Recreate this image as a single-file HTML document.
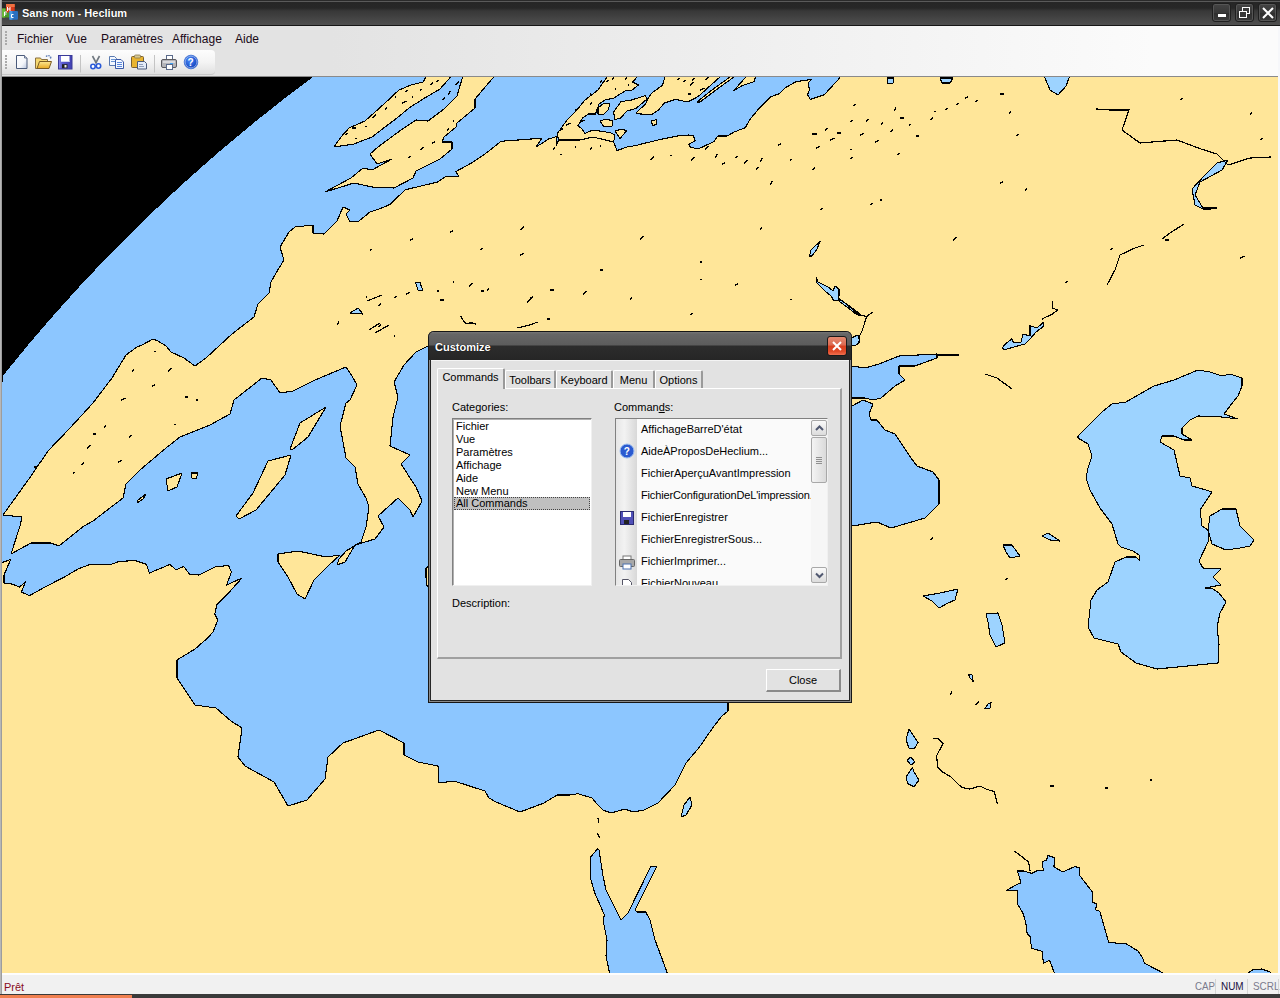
<!DOCTYPE html>
<html><head><meta charset="utf-8">
<style>
*{box-sizing:border-box}
html,body{margin:0;padding:0}
body{width:1280px;height:998px;overflow:hidden;position:relative;background:#3c3c3c;font-family:"Liberation Sans",sans-serif;font-size:11px;color:#000}
.abs{position:absolute}
#title{left:0;top:0;width:1280px;height:26px;background:linear-gradient(#2a2a2a 0,#2a2a2a 1px,#5a5a5a 1px,#5a5a5a 2px,#262626 2px,#272727 8px,#383838 11px,#4e4e4e 24.5px,#161616 25px)}
#title .t{left:22px;top:7px;color:#fff;font-weight:bold;font-size:11px;letter-spacing:0px;text-shadow:0 0 1px #000}
.wb{top:3px;width:19px;height:19px;border:1px solid #1f1f1f;border-radius:3px;background:linear-gradient(#444,#383838 50%,#2e2e2e 51%,#3a3a3a);box-shadow:inset 0 0 0 1px #555}
#menu{left:2px;top:26px;width:1276px;height:24px;background:linear-gradient(to right,#e3e3e3 0,#e3e3e3 330px,#fbfbfb 1150px)}
#menu span{position:absolute;top:6px;font-size:12px;color:#1a0a18}
#tbar{left:2px;top:50px;width:1276px;height:27px;background:linear-gradient(to right,#e3e3e3 0,#e3e3e3 330px,#fbfbfb 1150px)}
#tool{left:2px;top:50px;width:213px;height:25px;border-radius:0 4px 4px 0;background:linear-gradient(#fdfdfd,#f4f4f4 50%,#e0e0e0);border-bottom:1px solid #c8c8c8}
#mapbox{left:2px;top:76px;width:1276px;height:897px;overflow:hidden;border-top:1px solid #8a8a8a}
#mapbox svg{position:absolute;left:-2px;top:-77px}
#status{left:2px;top:973px;width:1278px;height:21px;background:#f1f1f1;border-top:2px solid #fdfdfd}
#status .p{left:2px;top:6px;color:#8a0c1c;font-size:11px}
#status .k{top:5px;font-size:11px;color:#7a7a8c}
#lb{left:0;top:0;width:2px;height:994px;background:linear-gradient(to right,#c4c4c4,#909090)}
#rb{left:1278px;top:26px;width:2px;height:968px;background:#f6f7fa}
#task{left:0;top:994px;width:1280px;height:4px;background:#3a3a3a}
#task .o{left:0;top:1px;width:132px;height:3px;background:#f08050}

/* dialog */
#dlg{left:428px;top:331px;width:424px;height:372px;background:#262626;border-radius:6px 6px 0 0;box-shadow:inset 0 0 0 1px #161616,inset 0 0 0 2px #8a8a8a}
#dlg .tb{left:1px;top:1px;width:422px;height:28px;border-radius:5px 5px 0 0;background:linear-gradient(#777 0,#666 2px,#5c5c5c 13px,#2c2c2c 14px,#262626 28px)}
#dlg .tt{left:7px;top:10px;color:#fff;font-weight:bold;font-size:11px;text-shadow:0 0 1px #000}
#dlg .xb{left:399px;top:5px;width:20px;height:20px;border-radius:3px;border:1px solid #1a1a1a;background:linear-gradient(#e58a70 0,#dc6a52 45%,#d8401f 50%,#e04a28 80%,#f07050 100%)}
#dlg .client{left:3px;top:29px;width:418px;height:340px;background:#e2e2e2;border-top:1px solid #f4f4f4}
.tab{position:absolute;top:9px;height:18px;background:#e2e2e2;border:1px solid #fff;border-bottom:none;border-right:2px solid #9a9a9a;border-radius:2px 2px 0 0;font-size:11px;padding-top:3px;text-align:center}
.tab.act{top:7px;height:21px;z-index:2;padding-top:2px}
#panel{left:6px;top:27px;width:405px;height:271px;border:1px solid #fff;border-right:2px solid #a0a0a0;border-bottom:2px solid #a0a0a0}
.lbl{position:absolute;font-size:11px}
#cat{left:21px;top:57px;width:140px;height:168px;background:#fff;border:1px solid #808080;border-right-color:#f0f0f0;border-bottom-color:#f0f0f0;box-shadow:inset 1px 1px 0 #b0b0b0}
#cat div{position:absolute;left:3px;font-size:11px;line-height:13px}
#cmd{left:184px;top:57px;width:213px;height:168px;background:#fafafa;border:1px solid #808080;border-right-color:#f0f0f0;border-bottom-color:#f0f0f0;overflow:hidden}
#cmd .gut{left:0;top:0;width:21px;height:166px;background:linear-gradient(to right,#e6e6e6,#f2f2f2 40%,#d8d8d8)}
#cmd .it{position:absolute;left:25px;font-size:11px;white-space:nowrap}
#cmd .sb{left:195px;top:0;width:17px;height:166px;background:#f6f6f6}
.sbtn{position:absolute;left:0px;width:16px;height:16px;border:1px solid #a8a8a8;border-radius:2px;background:linear-gradient(#fafafa,#dcdcdc)}
.thumb{position:absolute;left:0px;top:18px;width:16px;height:46px;border:1px solid #a8a8a8;border-radius:2px;background:linear-gradient(to right,#f4f4f4,#dadada)}
#close{left:335px;top:308px;width:75px;height:23px;background:#e2e2e2;border:1px solid #fff;border-right:2px solid #8a8a8a;border-bottom:2px solid #8a8a8a;font-size:11px;text-align:center;padding-top:4px}
</style></head><body>
<div id="title" class="abs">
  <svg class="abs" style="left:0;top:0" width="20" height="22" viewBox="0 0 20 22">
    <rect x="2" y="8.5" width="7.5" height="9" rx="1" fill="#4a9a2a"/><rect x="2" y="8.5" width="3" height="9" fill="#6ab83a"/>
    <rect x="6" y="4" width="8.7" height="8.5" rx="1" fill="#d83a1a"/><rect x="6" y="4" width="8.7" height="3" fill="#f07040"/>
    <rect x="9.4" y="11" width="8.6" height="8.7" rx="1" fill="#2a70c0"/><rect x="9.4" y="11" width="3" height="8.7" fill="#4a9ae0"/>
    <path d="M7.5,7 v4 M10,7 v4 M7.5,9 h2.5" stroke="#fff" stroke-width="1"/>
    <path d="M4.5,12 v4 M4.5,12 h2.5 M4.5,14 h2" stroke="#fff" stroke-width="1"/>
    <path d="M13.5,14.5 h-2 v3 h2" stroke="#fff" stroke-width="1" fill="none"/>
  </svg>
  <div class="abs t">Sans nom - Heclium</div>
  <div class="abs wb" style="left:1212px"><div class="abs" style="left:5px;top:10px;width:8px;height:3px;background:#fff"></div></div>
  <div class="abs wb" style="left:1235px"><div class="abs" style="left:6px;top:3px;width:8px;height:7px;border:1.5px solid #fff"></div><div class="abs" style="left:3px;top:7px;width:8px;height:7px;border:1.5px solid #fff;background:#3a3a3a"></div></div>
  <div class="abs wb" style="left:1258px"><svg class="abs" style="left:2px;top:2px" width="14" height="14"><path d="M2,2 L12,12 M12,2 L2,12" stroke="#fff" stroke-width="2"/></svg></div>
</div>
<div id="menu" class="abs">
  <div class="abs" style="left:3px;top:5px;width:2px;height:14px;background:repeating-linear-gradient(#aaa 0,#aaa 2px,transparent 2px,transparent 3px)"></div>
  <span style="left:15px">Fichier</span><span style="left:64px">Vue</span><span style="left:99px">Paramètres</span><span style="left:170px">Affichage</span><span style="left:233px">Aide</span>
</div>
<div id="tbar" class="abs"></div>
<div id="tool" class="abs">
  <div class="abs" style="left:3px;top:5px;width:2px;height:14px;background:repeating-linear-gradient(#aaa 0,#aaa 2px,transparent 2px,transparent 3px)"></div>
  <svg class="abs" style="left:0;top:0" width="213" height="25">
    <defs>
      <linearGradient id="gdoc" x1="0" y1="0" x2="1" y2="1"><stop offset="0" stop-color="#fff"/><stop offset="0.6" stop-color="#f4f6fa"/><stop offset="1" stop-color="#b8c4dc"/></linearGradient>
      <linearGradient id="gfold" x1="0" y1="0" x2="0" y2="1"><stop offset="0" stop-color="#fde890"/><stop offset="1" stop-color="#e8a820"/></linearGradient>
      <linearGradient id="gflop" x1="0" y1="0" x2="1" y2="0"><stop offset="0" stop-color="#8c8ce8"/><stop offset="0.3" stop-color="#5a5ad0"/><stop offset="1" stop-color="#4040b0"/></linearGradient>
      <radialGradient id="ghelp" cx="0.4" cy="0.35" r="0.7"><stop offset="0" stop-color="#4a8af8"/><stop offset="1" stop-color="#0a3ab8"/></radialGradient>
    </defs>
    <path d="M14.5,5.5 h8 l2.5,2.5 v10.5 h-10.5 z" fill="url(#gdoc)" stroke="#4a5a7a" stroke-width="1"/>
    <path d="M22.5,5.5 v2.5 h2.5" fill="#dde" stroke="#4a5a7a" stroke-width="0.8"/>
    <path d="M33.5,8 h5 l1,1.5 h6 v9 h-12 z" fill="#f6d870" stroke="#8a7040" stroke-width="1"/>
    <path d="M35,18.5 l2.5,-7 h12 l-2.5,7 z" fill="url(#gfold)" stroke="#7a5a20" stroke-width="1"/>
    <path d="M44,6.5 q2.5,-2 5,0.5" fill="none" stroke="#3a60a8" stroke-width="1.2" stroke-dasharray="1.5,1"/><path d="M47.5,7.5 l2,-0.5 -0.5,2 z" fill="#3a60a8"/>
    <rect x="56.5" y="5.5" width="13.5" height="13.5" fill="url(#gflop)" stroke="#3a3a98" stroke-width="1"/>
    <rect x="59" y="6" width="8.5" height="6" fill="#fff"/><rect x="59" y="11" width="8.5" height="1" fill="#d0d4f0"/>
    <rect x="60" y="14.2" width="5.5" height="4" fill="#222"/><rect x="62.5" y="15" width="2" height="2.5" fill="#eee"/>
    <line x1="78.5" y1="5" x2="78.5" y2="22.5" stroke="#c4c4c4"/>
    <path d="M90.5,6 L94.5,13.5 M97.5,6 L93.5,13.5" stroke="#707880" stroke-width="1.6"/>
    <circle cx="91" cy="16.5" r="2.2" fill="#fff" stroke="#2a5ad8" stroke-width="1.6"/><circle cx="96.5" cy="16" r="2.2" fill="#fff" stroke="#2a5ad8" stroke-width="1.6"/>
    <path d="M107.5,6.5 h5 l2,2 v7 h-7 z" fill="#f4f8ff" stroke="#5a7ab0" stroke-width="1"/><path d="M109,9.5 h4 M109,11.5 h4" stroke="#5a8ad0" stroke-width="0.9"/>
    <path d="M113.5,9.5 h5.5 l2.5,2.5 v6.5 h-8 z" fill="#f4f8ff" stroke="#3a5aa8" stroke-width="1"/><path d="M115,12.5 h5 M115,14.5 h5 M115,16.5 h5" stroke="#4a7ad8" stroke-width="0.9"/>
    <rect x="129.5" y="6.5" width="12" height="11" rx="1" fill="#e8b430" stroke="#7a6030" stroke-width="1"/>
    <rect x="132.5" y="5" width="6" height="3" rx="1" fill="#d8c890" stroke="#8a7a50" stroke-width="0.8"/>
    <path d="M135.5,11.5 h7 l2,2 v5.5 h-9 z" fill="#e4ecf8" stroke="#4a5a7a" stroke-width="1"/><path d="M137,14.5 h4 M137,16.5 h5" stroke="#7a8aa8" stroke-width="0.8"/>
    <line x1="152.5" y1="5" x2="152.5" y2="22.5" stroke="#c4c4c4"/>
    <rect x="164.5" y="5.5" width="6" height="4" fill="#fff" stroke="#5a6a8a" stroke-width="1"/>
    <rect x="159.5" y="9.5" width="15" height="8" rx="1.5" fill="#b4b4b8" stroke="#5a5a60" stroke-width="1"/><rect x="161" y="11" width="12" height="2" fill="#d8d8dc"/><rect x="168" y="13" width="3" height="1" fill="#40a0f0"/>
    <rect x="164.5" y="14.5" width="6" height="5" fill="#fff" stroke="#5a6a8a" stroke-width="1"/>
    <circle cx="189" cy="12" r="6.8" fill="url(#ghelp)" stroke="#4a7ad8" stroke-width="1"/><circle cx="189" cy="12" r="5.8" fill="none" stroke="#fff" stroke-width="0.6" opacity="0.7"/>
    <text x="185.6" y="16" font-size="10" font-weight="bold" fill="#fff" font-family="Liberation Sans">?</text>
  </svg>
</div>
<div id="mapbox" class="abs">
<svg width="1280" height="998" viewBox="0 0 1280 998" shape-rendering="crispEdges">
<rect x="0" y="0" width="1280" height="998" fill="#FFE699"/>
<path d="M2,376 A1660,1660 0 0 1 312,77 L313.5,75.5 L840,75.5 L840,75.5 L839.4,78.3 L833.75,84.4 L824.4,94.7 L810.3,99.4 L807.5,94.7 L809.4,90 L808.4,82.5 L811.25,79.7 L809.4,79.7 L796,81.6 L785,88 L779.4,93.75 L771,96.6 L758.75,108.75 L749.4,120 L745.6,127.5 L733.75,132.2 L727.2,136 L717.8,136 L714,141.6 L698,149 L690.6,147.2 L688.75,144.4 L695.3,140.6 L693.4,136 L688.75,135 L677.5,136 L663.4,138.75 L640,144.4 L636,145.5 L627,147 L617,150.6 L613.6,142 L593,137 L580,140 L558.6,140 L556.5,145.5 L557,136.3 L548.75,139 L536,147 L541.75,138.4 L539,138.4 L520.6,139.8 L501,141.25 L487,152.5 L472.8,162.3 L456,171.5 L458.75,176.4 L446,176.4 L437.7,182 L405.3,189.8 L389.8,204.5 L380,208.75 L370,212 L359,221 L350,222 L346,214 L350,210 L343,207 L337,221 L324,234 L313,233 L313,225 L295,227 L289,232 L280,247 L284,260 L276,273 L271,282 L269,293 L258,304 L254,317 L232,334 L206,358 L195,366 L188,361 L184,358 L171,352 L166,346 L158,341 L153,339 L142,345 L137,347 L126,355 L112,378 L93,403 L70,428 L48,451 L31,476 L3,515 L22,517 L20,526 L11,554 L31,543 L51,543 L59,546 L84,526 L93,521 L123,498 L126,484 L140,470 L166,448 L180,437 L210,425 L230,414 L234,400 L262,378 L271,380 L280,393 L293,391 L315,380 L346,367 L352,376 L357,385 L350,400 L346,403 L340,426 L346,458 L355,467 L358,484 L366,498 L369,507 L366,527 L361,542 L346,551 L339,559 L337,565 L345,562 L355,545 L375,539 L384,527 L378,516 L398,498 L410,510 L413,517 L422,501 L416,487 L401,464 L410,455 L390,446 L393,417 L398,397 L394,382 L404,365 L416,352 L428,346 L445,346 L445,690 L728,690 L728,702 L728,711 L721.5,716.5 L713,727.5 L699.5,747 L686,763 L675,785 L658,803 L644,810 L633,812 L625,809 L611,813 L603,810 L597.5,804.7 L592,798 L578,793.7 L570,795 L557,795 L544,803 L520,812 L496,802 L489,798 L485,791 L454,781 L439,783 L438,766 L418,762 L404,755 L404,743 L379,730 L343,743 L328,757 L325,779 L307,800 L288,806 L274,782 L245,766 L238,757 L242,728 L231,721 L216,708 L195,705 L177,678 L177,660 L195,649 L207,638.6 L213,632 L217.8,620 L214.8,614 L216.8,604.5 L228.5,593 L242,578 L226.6,585 L231.4,572 L228.5,565.4 L215,567 L199,575 L189.5,574 L183.6,566.4 L176,570 L170,564.4 L149.4,573 L146.5,564.4 L135,560.5 L119,561.5 L111,564.4 L90,564.4 L78,569 L64.5,577 L45,587 L29.3,595.7 L21.5,592 L25.4,582 L19.5,587 L11.7,584 L4,583 L4,575 L10.7,559.5 L2,562.5 L1,562.5 Z" fill="#8CC6FF" stroke="#000" stroke-width="1.1" stroke-linejoin="round"/>
<path d="M0,70 L330,70 L312,77 A1660,1660 0 0 0 2,376 L0,390 Z" fill="#000"/>
<polygon points="334,147 341,137 349,128 365,121 384,104 399,90 411,85 423,82 427,75.5 452,75.5 440,89 423,99 409,108 397,118 385,127 372,137 354,144" fill="#FFE699" stroke="#000" stroke-width="1.1" stroke-linejoin="round"/>
<polygon points="463,75.5 495,75.5 475,99 475,108 457,123 456,127 444,137 442,142 452,142 452,149 440,159 416,171 413,178 394,188 372,187 354,183 325,192 351,178 363,168 372,170 392,159 377,164 370,154 378,147 401,130 416,120 428,121 444,109 457,96" fill="#FFE699" stroke="#000" stroke-width="1.1" stroke-linejoin="round"/>
<polygon points="608,75.5 638.5,75.5 632.5,82 638.5,85 632,90 625,91 614,98 605,100 599,104 595.5,114 588.7,114 582.7,118 578,125.7 582,129 585,133.4 593,130 610,132.6 615,135 613.6,142 593,137 580,140 558.6,140 557,134 562,127 567,120 576,111 585,100 598,90" fill="#FFE699" stroke="#000" stroke-width="1.1" stroke-linejoin="round"/>
<polygon points="598,108 604,103 610,104 608,110 603,115 598,114" fill="#FFE699" stroke="#000" stroke-width="1.1" stroke-linejoin="round"/>
<polygon points="600,121 606,119 613,121 612,126 604,127" fill="#FFE699" stroke="#000" stroke-width="1.1" stroke-linejoin="round"/>
<polygon points="613.6,112 621,101.6 631.6,100 645.4,95.6 647,99 636,108.5 627,111 620.5,118 615,119.7" fill="#FFE699" stroke="#000" stroke-width="1.1" stroke-linejoin="round"/>
<polygon points="651,121 656,119.7 657,124 653,125.7" fill="#FFE699" stroke="#000" stroke-width="1.1" stroke-linejoin="round"/>
<polygon points="615,131 622,129 626.5,131 620,138.6" fill="#FFE699" stroke="#000" stroke-width="1.1" stroke-linejoin="round"/>
<polygon points="665.3,75.5 721.6,75.5 698,96.6 687.8,102 675.6,99.4 664.4,103 658.75,109.7 652,114.4 640,114 636,112.8 645.6,104 648,98.4 652,92.8 662.5,85.3" fill="#FFE699" stroke="#000" stroke-width="1.1" stroke-linejoin="round"/>
<polygon points="733.75,90.5 741,82.5 747,75.5 756,75.5 754,81.6 743,85.3" fill="#FFE699" stroke="#000" stroke-width="1.1" stroke-linejoin="round"/>
<polygon points="697,102 712,90 732,75.5 736,75.5 716,90 700,102" fill="#FFE699" stroke="#000" stroke-width="1.1" stroke-linejoin="round"/>
<polygon points="290,449 300,423 326,407 308,437 292,450" fill="#FFE699" stroke="#000" stroke-width="1.1" stroke-linejoin="round"/>
<polygon points="236,516 253,493 268,461 291,455 285,475 256,510 239,519" fill="#FFE699" stroke="#000" stroke-width="1.1" stroke-linejoin="round"/>
<polygon points="278,554 298,551 326,557 340,555 329,565 314,580 305,599 297,594 288,577 278,562" fill="#FFE699" stroke="#000" stroke-width="1.1" stroke-linejoin="round"/>
<polygon points="166,479 182,473 177,487 168,491" fill="#FFE699" stroke="#000" stroke-width="1.1" stroke-linejoin="round"/>
<polygon points="191,473 198,473 196,479 192,478" fill="#FFE699" stroke="#000" stroke-width="1.1" stroke-linejoin="round"/>
<polygon points="138,500 146,494 143,499 137,503" fill="#FFE699" stroke="#000" stroke-width="1.1" stroke-linejoin="round"/>
<polygon points="426,568 429,566 431,570 431,586 427,586 426,578" fill="#FFE699" stroke="#000" stroke-width="1.1" stroke-linejoin="round"/>
<polygon points="852,366 865,368 879,364 899,356 937,354 937,358 915,366 899,366 899,374 905,380 895,386 881,398 873,400 865,398 852,398 800,398 800,366" fill="#8CC6FF" stroke="#000" stroke-width="1.1" stroke-linejoin="round"/>
<polygon points="852,406 863,400 873,404 869,414 871,420 877,420 885,430 895,434 911,458 917,466 933,472 939,480 939,504 925,518 891,528 877,522 852,526 700,530 700,406" fill="#8CC6FF" stroke="#000" stroke-width="1.1" stroke-linejoin="round"/>
<polygon points="597.5,848.8 590.7,857 590.7,879 594.8,893 604.4,915 603,920 607,940 606,956 610,975 668,975 661,956 655,940 650,920 645.8,912 637,912 635,910 656.5,867 651,866 628,913 621,920 606,890 603,876 599,850" fill="#8CC6FF" stroke="#000" stroke-width="1.1" stroke-linejoin="round"/>
<polygon points="1006.3,890.5 1016.7,884.5 1021,883 1017.5,871 1024,871 1031.6,873.4 1037.5,870.4 1043.4,870.4 1042,862 1046.4,860 1048,855.6 1055,857.8 1053.8,866.7 1062.7,872 1074.6,866.7 1079,867.5 1079.8,875.6 1092.4,892 1092.4,902.3 1096.9,903.8 1095.4,909.8 1099.8,911.2 1108.75,942.4 1126.6,944 1138.4,951.3 1143,958.75 1144.4,963.2 1167,975 1055.3,975 1049.4,960.2 1043.4,963.2 1042,951.3 1031.6,948.4 1030,936.5 1027.1,933.5 1025.6,921.6 1022.7,912.7 1017.5,904 1017.5,890.5" fill="#8CC6FF" stroke="#000" stroke-width="1.1" stroke-linejoin="round"/>
<polygon points="1246,975 1252,970 1262,969 1270,972 1272,975" fill="#8CC6FF" stroke="#000" stroke-width="1.1" stroke-linejoin="round"/>
<polygon points="1078,436 1088,426 1102,412 1112,404 1126,402 1154,386 1174,380 1198,370 1210,372 1222,376 1230,374 1242,378 1242,386 1238,396 1230,406 1224,414 1238,419 1222,417 1198,416 1190,420 1182,428 1182,434 1192,440 1184,440 1174,436 1162,436 1160,442 1174,450 1180,476 1190,478 1192,486 1206,490 1212,492 1200,510 1202,526 1208,530 1209,540 1199,561 1203,568 1221,569 1213,577 1221,585 1205,588 1213,589 1219,593 1226,602 1220,613 1217,627 1219,644 1218,663 1157,669 1136,663 1121,652 1118,644 1094,638 1088,627 1091,600 1097,590 1108,582 1115,562 1126,557 1136,557 1140,561 1139,555 1133,551 1121,547 1118,544 1112,524 1100,508 1090,490 1086,478 1088,468 1092,456 1088,444 1078,438" fill="#9DD3FF" stroke="#000" stroke-width="1.1" stroke-linejoin="round"/>
<polygon points="816,277 818,282 822,284 828,287 833,291 835,286 839,289 839,296 838,300 834,301 831,296 826,292 817,283" fill="#9DD3FF" stroke="#000" stroke-width="1.1" stroke-linejoin="round"/>
<polygon points="838,299 844,302 852,309 859,315 861,316 856,314 847,307 840,302" fill="#9DD3FF" stroke="#000" stroke-width="1.1" stroke-linejoin="round"/>
<polygon points="849,339 858,335 860,342 856,345 849,346" fill="#9DD3FF" stroke="#000" stroke-width="1.1" stroke-linejoin="round"/>
<polygon points="1210,516 1222,509 1236,509 1240,526 1254,540 1250,546 1240,548 1226,550 1212,544 1208,530" fill="#9DD3FF" stroke="#000" stroke-width="1.1" stroke-linejoin="round"/>
<polygon points="809.5,256 811,250 815,246 820,241.6 817,249 812,256" fill="#9DD3FF" stroke="#000" stroke-width="1.1" stroke-linejoin="round"/>
<polygon points="415.6,283 420,282.5 423,291 418,290" fill="#9DD3FF" stroke="#000" stroke-width="1.1" stroke-linejoin="round"/>
<polygon points="350,313 358,308 363,314" fill="#9DD3FF" stroke="#000" stroke-width="1.1" stroke-linejoin="round"/>
<polygon points="1044,75.5 1070,75.5 1066,86 1058,95 1050,90" fill="#9DD3FF" stroke="#000" stroke-width="1.1" stroke-linejoin="round"/>
<polygon points="887,78 894,78 893,83 888,84" fill="#9DD3FF" stroke="#000" stroke-width="1.1" stroke-linejoin="round"/>
<polygon points="940,78 953,78 950,83 942,83" fill="#9DD3FF" stroke="#000" stroke-width="1.1" stroke-linejoin="round"/>
<polygon points="1002.5,347.5 1005.6,343.75 1011.9,338.75 1013.75,343 1021,342 1023,334 1030,336 1030,325.6 1037,328 1043,322.5 1044,326 1036,332 1030,339 1025,344 1012,347.5 1004,350" fill="#9DD3FF" stroke="#000" stroke-width="1.1" stroke-linejoin="round"/>
<polygon points="1003,545 1012,545 1020,556 1010,558 1006,552" fill="#9DD3FF" stroke="#000" stroke-width="1.1" stroke-linejoin="round"/>
<polygon points="986,614 998,613 1002,625 1005,643 996,647 990,635 988,622" fill="#9DD3FF" stroke="#000" stroke-width="1.1" stroke-linejoin="round"/>
<polygon points="923,596 940,593 958,589 955,600 948,603 939,608 932,601" fill="#9DD3FF" stroke="#000" stroke-width="1.1" stroke-linejoin="round"/>
<polygon points="1042,536 1048,533 1060,541 1050,540" fill="#9DD3FF" stroke="#000" stroke-width="1.1" stroke-linejoin="round"/>
<polygon points="909,729 906,740 909,748 914,749 918,742.6 911,732" fill="#9DD3FF" stroke="#000" stroke-width="1.1" stroke-linejoin="round"/>
<polygon points="907,760 911,757 915,762 911,765" fill="#9DD3FF" stroke="#000" stroke-width="1.1" stroke-linejoin="round"/>
<polygon points="912.5,767.5 906,777 907.6,783.5 914,786.7 919,780 914,772" fill="#9DD3FF" stroke="#000" stroke-width="1.1" stroke-linejoin="round"/>
<polygon points="968.6,674.4 972,675 973.4,681.7 970,678" fill="#9DD3FF" stroke="#000" stroke-width="1.1" stroke-linejoin="round"/>
<polygon points="984.7,709 988,704 991,702.5 990,708" fill="#9DD3FF" stroke="#000" stroke-width="1.1" stroke-linejoin="round"/>
<polygon points="681,817 684,805 690,797 692,805 686,815" fill="#9DD3FF" stroke="#000" stroke-width="1.1" stroke-linejoin="round"/>
<polygon points="1217,163 1228,160 1222,170 1200,182 1195,195 1203,208 1217,208 1205,210 1195,205 1192,189 1205,175" fill="#9DD3FF" stroke="#000" stroke-width="1.1" stroke-linejoin="round"/>
<polyline points="1014.5,851 1021,856 1028.6,862 1030,871" fill="none" stroke="#000" stroke-width="1.2"/>
<polyline points="598,818 599,823" fill="none" stroke="#000" stroke-width="1.2"/>
<polyline points="597,833 600,838" fill="none" stroke="#000" stroke-width="1.2"/>
<polyline points="838,298 848,305 856,311 861,315 866.5,316.5 873,312" fill="none" stroke="#000" stroke-width="1.2"/>
<polyline points="866.5,316.5 864,325 862,331 859.5,336 859,342" fill="none" stroke="#000" stroke-width="1.2"/>
<polyline points="367,301 382,295" fill="none" stroke="#000" stroke-width="1.2"/>
<polyline points="517,328 530,325 537.5,322" fill="none" stroke="#000" stroke-width="1.2"/>
<polyline points="527,302.5 533,296.6" fill="none" stroke="#000" stroke-width="1.2"/>
<polyline points="460.6,316 465,323 475.6,324" fill="none" stroke="#000" stroke-width="1.2"/>
<polyline points="369,330 380,323" fill="none" stroke="#000" stroke-width="1.2"/>
<polyline points="375,333 389,325" fill="none" stroke="#000" stroke-width="1.2"/>
<polyline points="1042.5,320 1042.5,318.75 1052.5,314 1057.5,310 1052.5,308 1052.5,301" fill="none" stroke="#000" stroke-width="1.2"/>
<polyline points="1096,109 1110,110 1129,110 1122,130 1140,143 1177,140 1201,149 1217,154 1228,165 1250,158 1271,157" fill="none" stroke="#000" stroke-width="1.2"/>
<polyline points="1162,239 1170,233 1184,224" fill="none" stroke="#000" stroke-width="1.2"/>
<polyline points="1107,285 1115,270 1120,255 1135,248 1144,245" fill="none" stroke="#000" stroke-width="1.2"/>
<polyline points="932.5,738.6 938,738.6 943,743.4 936.5,756 938,767.5 943,772.3 951,777 957.4,783.5 962,787.5 970,789 980,786 986,789 994,791.6 996,798 997.5,804.4" fill="none" stroke="#000" stroke-width="1.2"/>
<polyline points="985,374 997,378 1012,389" fill="none" stroke="#000" stroke-width="1.2"/>
<polyline points="938,355 959,355" fill="none" stroke="#000" stroke-width="1.2"/>
<line x1="345.0" y1="135.0" x2="347.5" y2="133.3" stroke="#000" stroke-width="1.3"/>
<line x1="352.0" y1="128.0" x2="356.0" y2="128.0" stroke="#000" stroke-width="1.3"/>
<line x1="365.0" y1="127.0" x2="366.5" y2="125.7" stroke="#000" stroke-width="1.3"/>
<line x1="372.0" y1="118.0" x2="375.8" y2="114.8" stroke="#000" stroke-width="1.3"/>
<line x1="385.0" y1="110.0" x2="386.5" y2="107.4" stroke="#000" stroke-width="1.3"/>
<line x1="395.0" y1="98.0" x2="396.0" y2="96.3" stroke="#000" stroke-width="1.3"/>
<line x1="405.0" y1="92.0" x2="407.3" y2="90.1" stroke="#000" stroke-width="1.3"/>
<line x1="420.0" y1="90.0" x2="421.9" y2="89.3" stroke="#000" stroke-width="1.3"/>
<line x1="430.0" y1="85.0" x2="433.1" y2="82.4" stroke="#000" stroke-width="1.3"/>
<line x1="436.0" y1="82.0" x2="438.3" y2="80.1" stroke="#000" stroke-width="1.3"/>
<line x1="402.0" y1="103.0" x2="406.7" y2="101.3" stroke="#000" stroke-width="1.3"/>
<line x1="412.0" y1="98.0" x2="413.0" y2="96.3" stroke="#000" stroke-width="1.3"/>
<line x1="355.0" y1="139.0" x2="356.6" y2="137.9" stroke="#000" stroke-width="1.3"/>
<line x1="455.0" y1="85.0" x2="458.8" y2="81.8" stroke="#000" stroke-width="1.3"/>
<line x1="448.0" y1="95.0" x2="450.5" y2="90.7" stroke="#000" stroke-width="1.3"/>
<line x1="442.0" y1="100.0" x2="445.1" y2="97.4" stroke="#000" stroke-width="1.3"/>
<line x1="408.0" y1="158.0" x2="410.3" y2="156.1" stroke="#000" stroke-width="1.3"/>
<line x1="420.0" y1="150.0" x2="424.1" y2="147.1" stroke="#000" stroke-width="1.3"/>
<line x1="432.0" y1="143.0" x2="434.8" y2="142.0" stroke="#000" stroke-width="1.3"/>
<line x1="447.0" y1="131.0" x2="448.5" y2="128.4" stroke="#000" stroke-width="1.3"/>
<line x1="453.0" y1="122.0" x2="454.0" y2="120.3" stroke="#000" stroke-width="1.3"/>
<line x1="600.0" y1="83.0" x2="601.5" y2="80.4" stroke="#000" stroke-width="1.3"/>
<line x1="606.0" y1="82.0" x2="608.3" y2="80.1" stroke="#000" stroke-width="1.3"/>
<line x1="612.0" y1="80.0" x2="614.5" y2="75.7" stroke="#000" stroke-width="1.3"/>
<line x1="625.0" y1="80.0" x2="626.9" y2="77.7" stroke="#000" stroke-width="1.3"/>
<line x1="628.0" y1="86.0" x2="629.0" y2="84.3" stroke="#000" stroke-width="1.3"/>
<line x1="615.0" y1="90.0" x2="616.0" y2="88.3" stroke="#000" stroke-width="1.3"/>
<line x1="590.0" y1="95.0" x2="591.0" y2="93.3" stroke="#000" stroke-width="1.3"/>
<line x1="575.0" y1="110.0" x2="577.8" y2="109.0" stroke="#000" stroke-width="1.3"/>
<line x1="566.0" y1="125.0" x2="570.7" y2="123.3" stroke="#000" stroke-width="1.3"/>
<line x1="560.0" y1="130.0" x2="562.8" y2="129.0" stroke="#000" stroke-width="1.3"/>
<line x1="580.0" y1="122.0" x2="584.7" y2="120.3" stroke="#000" stroke-width="1.3"/>
<line x1="590.0" y1="105.0" x2="591.9" y2="102.7" stroke="#000" stroke-width="1.3"/>
<line x1="677.0" y1="80.0" x2="679.5" y2="78.3" stroke="#000" stroke-width="1.3"/>
<line x1="683.0" y1="82.0" x2="685.3" y2="80.1" stroke="#000" stroke-width="1.3"/>
<line x1="690.0" y1="86.0" x2="693.2" y2="82.2" stroke="#000" stroke-width="1.3"/>
<line x1="700.0" y1="90.0" x2="704.7" y2="88.3" stroke="#000" stroke-width="1.3"/>
<line x1="688.0" y1="94.0" x2="691.0" y2="94.0" stroke="#000" stroke-width="1.3"/>
<line x1="692.0" y1="81.0" x2="694.6" y2="77.9" stroke="#000" stroke-width="1.3"/>
<line x1="705.0" y1="80.0" x2="708.8" y2="76.8" stroke="#000" stroke-width="1.3"/>
<line x1="366.0" y1="298.0" x2="367.0" y2="296.3" stroke="#000" stroke-width="1.3"/>
<line x1="378.0" y1="306.0" x2="381.3" y2="303.7" stroke="#000" stroke-width="1.3"/>
<line x1="394.0" y1="298.0" x2="396.5" y2="296.3" stroke="#000" stroke-width="1.3"/>
<line x1="406.0" y1="294.0" x2="409.8" y2="292.6" stroke="#000" stroke-width="1.3"/>
<line x1="437.0" y1="291.0" x2="439.0" y2="291.0" stroke="#000" stroke-width="1.3"/>
<line x1="453.0" y1="283.0" x2="454.0" y2="281.3" stroke="#000" stroke-width="1.3"/>
<line x1="469.0" y1="287.0" x2="472.2" y2="283.2" stroke="#000" stroke-width="1.3"/>
<line x1="481.0" y1="291.0" x2="484.0" y2="291.0" stroke="#000" stroke-width="1.3"/>
<line x1="487.0" y1="291.0" x2="488.5" y2="288.4" stroke="#000" stroke-width="1.3"/>
<line x1="337.0" y1="325.0" x2="339.0" y2="321.5" stroke="#000" stroke-width="1.3"/>
<line x1="378.0" y1="327.0" x2="381.1" y2="324.4" stroke="#000" stroke-width="1.3"/>
<line x1="394.0" y1="337.0" x2="395.3" y2="335.5" stroke="#000" stroke-width="1.3"/>
<line x1="469.0" y1="323.0" x2="473.0" y2="323.0" stroke="#000" stroke-width="1.3"/>
<line x1="530.0" y1="298.0" x2="531.5" y2="296.7" stroke="#000" stroke-width="1.3"/>
<line x1="547.0" y1="319.0" x2="550.0" y2="319.0" stroke="#000" stroke-width="1.3"/>
<line x1="812.0" y1="134.0" x2="817.0" y2="134.0" stroke="#000" stroke-width="1.3"/>
<line x1="825.0" y1="131.0" x2="827.6" y2="127.9" stroke="#000" stroke-width="1.3"/>
<line x1="837.0" y1="133.0" x2="841.0" y2="133.0" stroke="#000" stroke-width="1.3"/>
<line x1="850.0" y1="122.0" x2="852.3" y2="120.1" stroke="#000" stroke-width="1.3"/>
<line x1="866.0" y1="122.0" x2="868.6" y2="118.9" stroke="#000" stroke-width="1.3"/>
<line x1="881.0" y1="125.0" x2="882.5" y2="122.4" stroke="#000" stroke-width="1.3"/>
<line x1="909.0" y1="125.0" x2="910.9" y2="124.3" stroke="#000" stroke-width="1.3"/>
<line x1="934.0" y1="112.0" x2="935.6" y2="110.9" stroke="#000" stroke-width="1.3"/>
<line x1="956.0" y1="105.0" x2="958.5" y2="103.3" stroke="#000" stroke-width="1.3"/>
<line x1="778.0" y1="145.0" x2="780.8" y2="144.0" stroke="#000" stroke-width="1.3"/>
<line x1="816.0" y1="148.0" x2="819.8" y2="146.6" stroke="#000" stroke-width="1.3"/>
<line x1="850.0" y1="150.0" x2="851.6" y2="148.9" stroke="#000" stroke-width="1.3"/>
<line x1="875.0" y1="142.0" x2="878.8" y2="140.6" stroke="#000" stroke-width="1.3"/>
<line x1="691.0" y1="161.0" x2="694.2" y2="157.2" stroke="#000" stroke-width="1.3"/>
<line x1="722.0" y1="164.0" x2="724.8" y2="163.0" stroke="#000" stroke-width="1.3"/>
<line x1="744.0" y1="164.0" x2="747.2" y2="160.2" stroke="#000" stroke-width="1.3"/>
<line x1="756.0" y1="170.0" x2="758.6" y2="166.9" stroke="#000" stroke-width="1.3"/>
<line x1="812.0" y1="170.0" x2="815.3" y2="167.7" stroke="#000" stroke-width="1.3"/>
<line x1="850.0" y1="159.0" x2="852.3" y2="157.1" stroke="#000" stroke-width="1.3"/>
<line x1="897.0" y1="155.0" x2="899.5" y2="153.3" stroke="#000" stroke-width="1.3"/>
<line x1="916.0" y1="136.0" x2="919.0" y2="136.0" stroke="#000" stroke-width="1.3"/>
<line x1="853.0" y1="106.0" x2="855.3" y2="104.1" stroke="#000" stroke-width="1.3"/>
<line x1="894.0" y1="111.0" x2="896.0" y2="107.5" stroke="#000" stroke-width="1.3"/>
<line x1="1009.0" y1="114.0" x2="1010.9" y2="111.7" stroke="#000" stroke-width="1.3"/>
<line x1="1016.0" y1="136.0" x2="1018.3" y2="134.1" stroke="#000" stroke-width="1.3"/>
<line x1="1000.0" y1="183.0" x2="1002.8" y2="182.0" stroke="#000" stroke-width="1.3"/>
<line x1="705.0" y1="150.0" x2="708.2" y2="146.2" stroke="#000" stroke-width="1.3"/>
<line x1="715.0" y1="158.0" x2="717.5" y2="153.7" stroke="#000" stroke-width="1.3"/>
<line x1="735.0" y1="158.0" x2="737.5" y2="156.3" stroke="#000" stroke-width="1.3"/>
<line x1="760.0" y1="162.0" x2="762.5" y2="157.7" stroke="#000" stroke-width="1.3"/>
<line x1="790.0" y1="160.0" x2="791.9" y2="159.3" stroke="#000" stroke-width="1.3"/>
<line x1="830.0" y1="140.0" x2="834.7" y2="138.3" stroke="#000" stroke-width="1.3"/>
<line x1="860.0" y1="135.0" x2="863.8" y2="133.6" stroke="#000" stroke-width="1.3"/>
<line x1="890.0" y1="132.0" x2="893.1" y2="129.4" stroke="#000" stroke-width="1.3"/>
<line x1="900.0" y1="118.0" x2="904.0" y2="118.0" stroke="#000" stroke-width="1.3"/>
<line x1="930.0" y1="120.0" x2="933.1" y2="117.4" stroke="#000" stroke-width="1.3"/>
<line x1="945.0" y1="110.0" x2="947.3" y2="108.1" stroke="#000" stroke-width="1.3"/>
<line x1="965.0" y1="98.0" x2="967.8" y2="97.0" stroke="#000" stroke-width="1.3"/>
<line x1="975.0" y1="102.0" x2="977.3" y2="100.1" stroke="#000" stroke-width="1.3"/>
<line x1="553.0" y1="150.0" x2="554.5" y2="147.4" stroke="#000" stroke-width="1.3"/>
<line x1="560.0" y1="155.0" x2="561.5" y2="153.7" stroke="#000" stroke-width="1.3"/>
<line x1="575.0" y1="148.0" x2="576.0" y2="146.3" stroke="#000" stroke-width="1.3"/>
<line x1="590.0" y1="150.0" x2="591.5" y2="147.4" stroke="#000" stroke-width="1.3"/>
<line x1="600.0" y1="147.0" x2="601.3" y2="145.5" stroke="#000" stroke-width="1.3"/>
<line x1="650.0" y1="160.0" x2="653.8" y2="156.8" stroke="#000" stroke-width="1.3"/>
<line x1="670.0" y1="156.0" x2="671.6" y2="154.9" stroke="#000" stroke-width="1.3"/>
<line x1="121.0" y1="400.0" x2="125.7" y2="398.3" stroke="#000" stroke-width="1.3"/>
<line x1="93.0" y1="434.0" x2="96.0" y2="434.0" stroke="#000" stroke-width="1.3"/>
<line x1="104.0" y1="428.0" x2="105.9" y2="425.7" stroke="#000" stroke-width="1.3"/>
<line x1="87.0" y1="449.0" x2="90.2" y2="445.2" stroke="#000" stroke-width="1.3"/>
<line x1="81.0" y1="465.0" x2="84.1" y2="462.4" stroke="#000" stroke-width="1.3"/>
<line x1="73.0" y1="473.0" x2="74.9" y2="472.3" stroke="#000" stroke-width="1.3"/>
<line x1="118.0" y1="462.0" x2="121.8" y2="460.6" stroke="#000" stroke-width="1.3"/>
<line x1="129.0" y1="438.0" x2="131.6" y2="434.9" stroke="#000" stroke-width="1.3"/>
<line x1="174.0" y1="425.0" x2="175.6" y2="423.9" stroke="#000" stroke-width="1.3"/>
<line x1="196.0" y1="400.0" x2="198.0" y2="400.0" stroke="#000" stroke-width="1.3"/>
<line x1="185.0" y1="397.0" x2="188.0" y2="397.0" stroke="#000" stroke-width="1.3"/>
<line x1="152.0" y1="386.0" x2="154.8" y2="385.0" stroke="#000" stroke-width="1.3"/>
<line x1="132.0" y1="372.0" x2="133.5" y2="369.4" stroke="#000" stroke-width="1.3"/>
<line x1="154.0" y1="352.0" x2="155.6" y2="350.9" stroke="#000" stroke-width="1.3"/>
<line x1="168.0" y1="372.0" x2="171.2" y2="368.2" stroke="#000" stroke-width="1.3"/>
<line x1="34.0" y1="467.0" x2="37.0" y2="467.0" stroke="#000" stroke-width="1.3"/>
<line x1="520.0" y1="230.0" x2="523.8" y2="226.8" stroke="#000" stroke-width="1.3"/>
<line x1="640.0" y1="240.0" x2="643.2" y2="236.2" stroke="#000" stroke-width="1.3"/>
<line x1="700.0" y1="262.0" x2="702.0" y2="262.0" stroke="#000" stroke-width="1.3"/>
<line x1="760.0" y1="230.0" x2="761.5" y2="227.4" stroke="#000" stroke-width="1.3"/>
<line x1="820.0" y1="210.0" x2="822.5" y2="208.3" stroke="#000" stroke-width="1.3"/>
<line x1="870.0" y1="205.0" x2="872.5" y2="203.3" stroke="#000" stroke-width="1.3"/>
<line x1="770.0" y1="185.0" x2="772.5" y2="180.7" stroke="#000" stroke-width="1.3"/>
<line x1="953.0" y1="241.0" x2="956.2" y2="237.2" stroke="#000" stroke-width="1.3"/>
<line x1="1025.0" y1="191.0" x2="1026.5" y2="188.4" stroke="#000" stroke-width="1.3"/>
<line x1="1065.0" y1="283.0" x2="1067.5" y2="281.3" stroke="#000" stroke-width="1.3"/>
<line x1="1165.0" y1="240.0" x2="1169.0" y2="240.0" stroke="#000" stroke-width="1.3"/>
<line x1="1260.0" y1="140.0" x2="1262.5" y2="138.3" stroke="#000" stroke-width="1.3"/>
<line x1="1240.0" y1="258.0" x2="1244.7" y2="256.3" stroke="#000" stroke-width="1.3"/>
<line x1="600.0" y1="270.0" x2="603.0" y2="270.0" stroke="#000" stroke-width="1.3"/>
<line x1="700.0" y1="280.0" x2="701.5" y2="278.7" stroke="#000" stroke-width="1.3"/>
<line x1="735.0" y1="285.0" x2="737.8" y2="284.0" stroke="#000" stroke-width="1.3"/>
<line x1="690.0" y1="315.0" x2="692.5" y2="313.3" stroke="#000" stroke-width="1.3"/>
<line x1="583.0" y1="295.0" x2="586.2" y2="291.2" stroke="#000" stroke-width="1.3"/>
<line x1="550.0" y1="290.0" x2="554.0" y2="290.0" stroke="#000" stroke-width="1.3"/>
<line x1="630.0" y1="300.0" x2="631.9" y2="297.7" stroke="#000" stroke-width="1.3"/>
<line x1="790.0" y1="300.0" x2="791.6" y2="298.9" stroke="#000" stroke-width="1.3"/>
<line x1="700.0" y1="400.0" x2="701.6" y2="398.9" stroke="#000" stroke-width="1.3"/>
<line x1="930.0" y1="540.0" x2="933.3" y2="537.7" stroke="#000" stroke-width="1.3"/>
<line x1="1005.0" y1="580.0" x2="1007.5" y2="578.3" stroke="#000" stroke-width="1.3"/>
<line x1="950.0" y1="695.0" x2="952.0" y2="691.5" stroke="#000" stroke-width="1.3"/>
<line x1="975.0" y1="705.0" x2="978.8" y2="701.8" stroke="#000" stroke-width="1.3"/>
<line x1="1050.0" y1="786.0" x2="1054.0" y2="786.0" stroke="#000" stroke-width="1.3"/>
<line x1="1105.0" y1="788.0" x2="1108.0" y2="788.0" stroke="#000" stroke-width="1.3"/>
<line x1="1150.0" y1="780.0" x2="1152.0" y2="780.0" stroke="#000" stroke-width="1.3"/>
<line x1="370.0" y1="250.0" x2="371.9" y2="249.3" stroke="#000" stroke-width="1.3"/>
<line x1="410.0" y1="240.0" x2="412.8" y2="239.0" stroke="#000" stroke-width="1.3"/>
<line x1="450.0" y1="232.0" x2="452.8" y2="231.0" stroke="#000" stroke-width="1.3"/>
<line x1="480.0" y1="250.0" x2="482.3" y2="248.1" stroke="#000" stroke-width="1.3"/>
<line x1="520.0" y1="255.0" x2="523.8" y2="253.6" stroke="#000" stroke-width="1.3"/>
<line x1="440.0" y1="300.0" x2="444.0" y2="300.0" stroke="#000" stroke-width="1.3"/>
<line x1="880.0" y1="200.0" x2="882.0" y2="200.0" stroke="#000" stroke-width="1.3"/>
<line x1="1110.0" y1="250.0" x2="1112.5" y2="248.3" stroke="#000" stroke-width="1.3"/>
<line x1="1180.0" y1="100.0" x2="1182.3" y2="98.1" stroke="#000" stroke-width="1.3"/>
<line x1="1250.0" y1="115.0" x2="1251.5" y2="112.4" stroke="#000" stroke-width="1.3"/>
<line x1="1000.0" y1="94.0" x2="1004.0" y2="94.0" stroke="#000" stroke-width="1.3"/>
</svg>
</div>
<div id="lb" class="abs"></div>
<div id="rb" class="abs"></div>
<div id="status" class="abs">
  <div class="abs p">Prêt</div>
  <div class="abs k" style="left:1193px;transform:scaleX(0.88);transform-origin:0 0">CAP</div>
  <div class="abs" style="left:1213px;top:4px;width:1px;height:16px;background:#d4d4d4"></div>
  <div class="abs k" style="left:1219px;color:#1a1040;transform:scaleX(0.9);transform-origin:0 0">NUM</div>
  <div class="abs" style="left:1245px;top:4px;width:1px;height:16px;background:#d4d4d4"></div>
  <div class="abs k" style="left:1251px;transform:scaleX(0.9);transform-origin:0 0">SCRL</div>
  <div class="abs" style="left:1276px;top:4px;width:1px;height:16px;background:#d4d4d4"></div>
</div>
<div id="task" class="abs"><div class="abs o"></div></div>

<div id="dlg" class="abs">
  <div class="abs tb"></div>
  <div class="abs tt">Customize</div>
  <div class="abs xb"><svg class="abs" style="left:2px;top:2px" width="14" height="14"><path d="M3,3 L11,11 M11,3 L3,11" stroke="#fff" stroke-width="2"/></svg></div>
  <div class="abs client">
    <div class="tab act" style="left:6px;width:68px">Commands</div>
    <div class="tab" style="left:74px;width:51px">Toolbars</div>
    <div class="tab" style="left:125px;width:57px">Keyboard</div>
    <div class="tab" style="left:182px;width:42px">Menu</div>
    <div class="tab" style="left:224px;width:48px">Options</div>
    <div id="panel" class="abs"></div>
    <div class="lbl" style="left:21px;top:40px">Categories:</div>
    <div class="lbl" style="left:183px;top:40px">Comman<u>d</u>s:</div>
    <div id="cat" class="abs">
      <div style="top:1px">Fichier</div><div style="top:14px">Vue</div><div style="top:27px">Paramètres</div><div style="top:40px">Affichage</div><div style="top:53px">Aide</div><div style="top:66px">New Menu</div>
      <div style="top:78px;left:1px;width:136px;height:13px;background:#c0c0c0;outline:1px dotted #444;outline-offset:-1px;padding-left:2px">All Commands</div>
    </div>
    <div id="cmd" class="abs">
      <div class="abs gut"></div>
      <div class="it" style="top:4px">AffichageBarreD'état</div>
      <div class="it" style="top:26px">AideÀProposDeHeclium...</div>
      <div class="it" style="top:48px">FichierAperçuAvantImpression</div>
      <div class="it" style="top:70px;letter-spacing:-0.15px">FichierConfigurationDeL'impression.</div>
      <div class="it" style="top:92px">FichierEnregistrer</div>
      <div class="it" style="top:114px">FichierEnregistrerSous...</div>
      <div class="it" style="top:136px">FichierImprimer...</div>
      <div class="it" style="top:158px">FichierNouveau</div>
      <svg class="abs" style="left:0;top:0" width="22" height="166">
        <circle cx="11" cy="32" r="7" fill="#2a5ad0" stroke="#a0c0f0"/><text x="7.8" y="36" font-size="10" font-weight="bold" fill="#fff" font-family="Liberation Sans">?</text>
        <rect x="4.5" y="92.5" width="13" height="13" fill="#5050b8" stroke="#2a2a70"/><rect x="7" y="93" width="8" height="5" fill="#fff"/><rect x="8" y="101" width="5" height="4" fill="#222"/>
        <rect x="7" y="137" width="8" height="4" fill="#fff" stroke="#777"/><rect x="3.5" y="140.5" width="15" height="7" rx="1" fill="#a8a8a8" stroke="#666"/><rect x="7" y="145" width="8" height="5" fill="#fff" stroke="#4a70b0"/>
        <path d="M6.5,160.5 h6 l3,3 v6 h-9z" fill="#fff" stroke="#556"/>
      </svg>
      <div class="abs sb">
        <div class="sbtn" style="top:1px"><svg class="abs" style="left:2px;top:3px" width="11" height="8"><path d="M2,6 L5.5,2.5 L9,6" fill="none" stroke="#505870" stroke-width="2"/></svg></div>
        <div class="thumb"><div class="abs" style="left:4px;top:19px;width:6px;height:7px;background:repeating-linear-gradient(#909090 0,#909090 1px,transparent 1px,transparent 2px)"></div></div>
        <div class="sbtn" style="top:148px"><svg class="abs" style="left:2px;top:3px" width="11" height="8"><path d="M2,2.5 L5.5,6 L9,2.5" fill="none" stroke="#505870" stroke-width="2"/></svg></div>
      </div>
    </div>
    <div class="lbl" style="left:21px;top:236px">Description:</div>
    <div id="close" class="abs">Close</div>
  </div>
</div>
</body></html>
